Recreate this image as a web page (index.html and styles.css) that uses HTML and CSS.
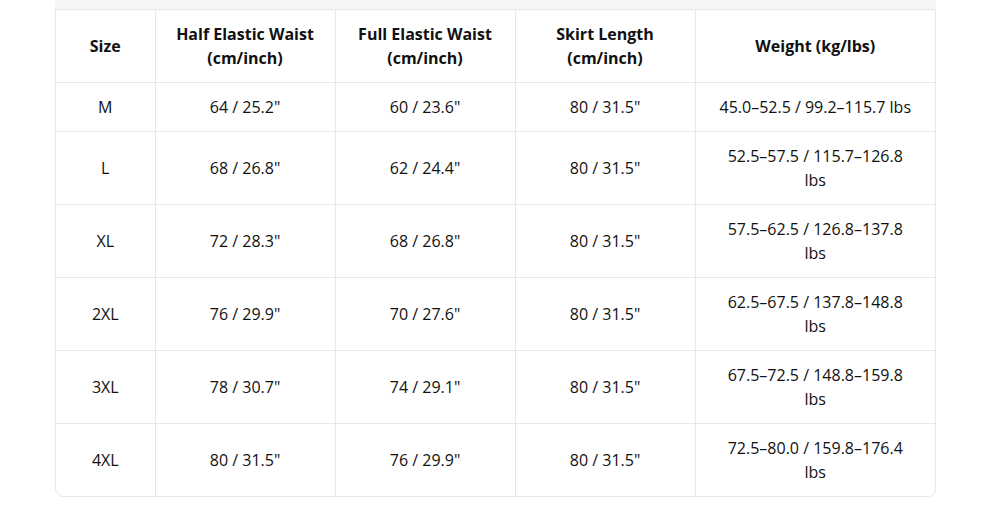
FILE: index.html
```html
<!DOCTYPE html>
<html>
<head>
<meta charset="utf-8">
<link rel="stylesheet" href="styles.css">
</head>
<body>
<div class="wrap">
  <div class="strip"></div>
  <div class="card">
    <table class="size-table">
      <colgroup>
        <col class="c1"><col class="c2"><col class="c3"><col class="c4"><col class="c5">
      </colgroup>
      <thead>
        <tr>
          <th>Size</th>
          <th>Half Elastic Waist<br>(cm/inch)</th>
          <th>Full Elastic Waist<br>(cm/inch)</th>
          <th>Skirt Length<br>(cm/inch)</th>
          <th>Weight (kg/lbs)</th>
        </tr>
      </thead>
      <tbody>
        <tr><td>M</td><td>64 / 25.2"</td><td>60 / 23.6"</td><td>80 / 31.5"</td><td>45.0–52.5 / 99.2–115.7 lbs</td></tr>
        <tr><td>L</td><td>68 / 26.8"</td><td>62 / 24.4"</td><td>80 / 31.5"</td><td>52.5–57.5 / 115.7–126.8 lbs</td></tr>
        <tr><td>XL</td><td>72 / 28.3"</td><td>68 / 26.8"</td><td>80 / 31.5"</td><td>57.5–62.5 / 126.8–137.8 lbs</td></tr>
        <tr><td>2XL</td><td>76 / 29.9"</td><td>70 / 27.6"</td><td>80 / 31.5"</td><td>62.5–67.5 / 137.8–148.8 lbs</td></tr>
        <tr><td>3XL</td><td>78 / 30.7"</td><td>74 / 29.1"</td><td>80 / 31.5"</td><td>67.5–72.5 / 148.8–159.8 lbs</td></tr>
        <tr><td>4XL</td><td>80 / 31.5"</td><td>76 / 29.9"</td><td>80 / 31.5"</td><td>72.5–80.0 / 159.8–176.4 lbs</td></tr>
      </tbody>
    </table>
  </div>
</div>
</body>
</html>
```
FILE: styles.css
```css
html, body {
  margin: 0;
  padding: 0;
  background: #ffffff;
}
body {
  font-family: "Open Sans", "Noto Sans", sans-serif;
  color: #111111;
}
.wrap {
  width: 881px;
  margin-left: 55px;
}
.strip {
  height: 9px;
  background: #f4f5f7;
}
.card {
  border: 1px solid #e8e8e8;
  border-radius: 0 0 8px 8px;
  overflow: hidden;
}
.size-table {
  width: 100%;
  border-collapse: collapse;
  table-layout: fixed;
  font-size: 16px;
  line-height: 24px;
}
.c1 { width: 99px; }
.c2 { width: 180px; }
.c3 { width: 180px; }
.c4 { width: 180px; }
.c5 { width: 240px; }
.size-table th,
.size-table td {
  padding: 12px 16px;
  text-align: center;
  vertical-align: middle;
  border-right: 1px solid #e8e8e8;
  border-bottom: 1px solid #e8e8e8;
}
.size-table th {
  font-weight: 700;
}
.size-table td {
  font-weight: 400;
}
.size-table tr > :last-child {
  border-right: none;
  padding-left: 21px;
  padding-right: 21px;
}
.size-table tbody tr:last-child td {
  border-bottom: none;
}
```
